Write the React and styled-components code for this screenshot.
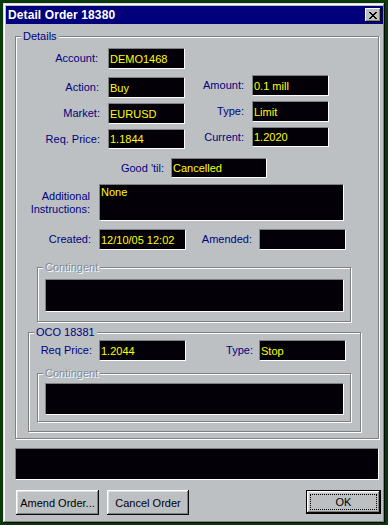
import React from 'react';
import styled, { createGlobalStyle } from 'styled-components';

const GlobalStyle = createGlobalStyle`
	html, body {
		margin: 0;
		padding: 0;
		background: #0a3a0c;
	}
	body {
		padding: 3px 0 0 3px;
		font-family: "Liberation Sans", Arial, sans-serif;
	}
`;

const Window = styled.div`
	width: 382px;
	height: 520px;
	box-sizing: border-box;
	background: #bcc0c3;
	padding: 3px 2px 0 3px;
	box-shadow: inset -1px -1px #0a0a0a, inset 1px 1px #dfdfdf, inset -2px -2px #808080, inset 2px 2px #ffffff;
	display: flex;
	flex-direction: column;
`;

const TitleBar = styled.div`
	height: 18px;
	background: #00007b;
	display: flex;
	align-items: center;
	justify-content: space-between;
	padding: 0 2px 0 2px;
`;

const Title = styled.span`
	font-family: "Liberation Sans", Arial, sans-serif;
	font-weight: bold;
	font-size: 12px;
	color: #fff;
	letter-spacing: 0.1px;
`;

const CloseBox = styled.div`
	width: 16px;
	height: 14px;
	box-sizing: border-box;
	background: #bcc0c3;
	box-shadow: inset -1px -1px #0a0a0a, inset 1px 1px #ffffff, inset -2px -2px #808080;
	display: flex;
	align-items: center;
	justify-content: center;
`;

const Body = styled.div`
	padding: 12px 4px 0 9px;
	display: flex;
	flex-direction: column;
`;

const Group = styled.div`
	position: relative;
	border: 1px solid #808080;
	box-shadow: inset 1px 1px #fff, 1px 1px #fff;
	margin-left: ${({ $ml }) => $ml || 0}px;
	margin-top: ${({ $mt }) => $mt || 0}px;
	width: ${({ $w }) => ($w ? `${$w}px` : 'auto')};
	padding-bottom: ${({ $pb }) => $pb || 0}px;
	box-sizing: border-box;
	display: flex;
	flex-direction: column;
`;

const Caption = styled.span`
	position: absolute;
	top: -7px;
	left: 5px;
	padding: 0 2px;
	background: #bcc0c3;
	font-size: 11px;
	line-height: 13px;
	color: ${({ $disabled }) => ($disabled ? '#858a8e' : '#000080')};
	text-shadow: ${({ $disabled }) => ($disabled ? '1px 1px 0 #fff' : 'none')};
`;

const Row = styled.div`
	display: flex;
	align-items: flex-start;
	margin-top: ${({ $mt }) => $mt}px;
`;

const Pair = styled.div`
	display: flex;
	align-items: center;
	margin-top: ${({ $up }) => ($up ? -$up : 0)}px;
`;

const Label = styled.div`
	width: ${({ $w }) => $w}px;
	padding-right: ${({ $gap }) => $gap}px;
	box-sizing: border-box;
	text-align: right;
	font-size: 11px;
	line-height: 13px;
	color: #000080;
	white-space: pre-line;
`;

const Field = styled.div`
	width: ${({ $w }) => $w}px;
	height: ${({ $h }) => $h}px;
	box-sizing: border-box;
	background: #040008;
	border-top: 1px solid #808080;
	border-left: 1px solid #808080;
	border-bottom: 1px solid #fff;
	border-right: 1px solid #fff;
	color: #ffff00;
	font-size: 11px;
	line-height: ${({ $multi, $h }) => ($multi ? '13px' : `${$h - 3}px`)};
	padding: 1px 0 0 1px;
	margin-left: ${({ $ml }) => $ml || 0}px;
	margin-top: ${({ $mt }) => $mt || 0}px;
	white-space: nowrap;
	overflow: hidden;
`;

const StatusBar = styled(Field)`
	width: auto;
	margin-top: 9px;
`;

const ButtonRow = styled.div`
	display: flex;
	align-items: flex-start;
	gap: 8px;
	margin: 10px -2px 0 1px;
`;

const Button = styled.button`
	width: ${({ $w }) => $w}px;
	height: ${({ $h }) => $h || 25}px;
	padding: 0;
	background: #bcc0c3;
	border: ${({ $default }) => ($default ? '1px solid #000' : 'none')};
	box-shadow: inset -1px -1px #0a0a0a, inset 1px 1px #ffffff, inset -2px -2px #808080, inset 2px 2px #dfdfdf;
	font-family: "Liberation Sans", Arial, sans-serif;
	font-size: 11px;
	color: #000;
	white-space: nowrap;
	margin-left: ${({ $push }) => ($push ? 'auto' : '0')};
	position: relative;
	display: flex;
	align-items: center;
	justify-content: center;
`;

const FocusRing = styled.span`
	position: absolute;
	inset: 3px;
	border: 1px dotted #000;
`;

const CloseIcon = () => (
	<svg width="8" height="7" viewBox="0 0 8 7">
		<path d="M0 0h2v1h1v1h2V1h1V0h2v1H7v1H6v1H5v1h1v1h1v1h1v1H6V6H5V5H3v1H2v1H0V6h1V5h1V4h1V3H2V2H1V1H0z" fill="#000" />
	</svg>
);

const App = () => (
	<>
		<GlobalStyle />
		<Window>
			<TitleBar>
				<Title>Detail Order 18380</Title>
				<CloseBox><CloseIcon /></CloseBox>
			</TitleBar>
			<Body>
				<Group $pb={6}>
					<Caption>Details</Caption>
					<Row $mt={11}>
						<Pair>
							<Label $w={92} $gap={10}>Account:</Label>
							<Field $w={77} $h={21}>DEMO1468</Field>
						</Pair>
					</Row>
					<Row $mt={8}>
						<Pair>
							<Label $w={92} $gap={9}>Action:</Label>
							<Field $w={77} $h={21}>Buy</Field>
						</Pair>
						<Pair $up={2}>
							<Label $w={67} $gap={8}>Amount:</Label>
							<Field $w={77} $h={21}>0.1 mill</Field>
						</Pair>
					</Row>
					<Row $mt={5}>
						<Pair>
							<Label $w={92} $gap={8}>Market:</Label>
							<Field $w={77} $h={21}>EURUSD</Field>
						</Pair>
						<Pair $up={2}>
							<Label $w={67} $gap={8}>Type:</Label>
							<Field $w={77} $h={21}>Limit</Field>
						</Pair>
					</Row>
					<Row $mt={5}>
						<Pair>
							<Label $w={92} $gap={8}>Req. Price:</Label>
							<Field $w={77} $h={20}>1.1844</Field>
						</Pair>
						<Pair $up={2}>
							<Label $w={67} $gap={8}>Current:</Label>
							<Field $w={77} $h={20}>1.2020</Field>
						</Pair>
					</Row>
					<Row $mt={9}>
						<Pair>
							<Label $w={155} $gap={7}>Good 'til:</Label>
							<Field $w={96} $h={20}>Cancelled</Field>
						</Pair>
					</Row>
					<Row $mt={6}>
						<Pair>
							<Label $w={83} $gap={9}>{'Additional\nInstructions:'}</Label>
							<Field $w={245} $h={37} $multi>None</Field>
						</Pair>
					</Row>
					<Row $mt={8}>
						<Pair>
							<Label $w={83} $gap={8}>Created:</Label>
							<Field $w={87} $h={21}>12/10/05 12:02</Field>
						</Pair>
						<Pair>
							<Label $w={73} $gap={7}>Amended:</Label>
							<Field $w={87} $h={21}></Field>
						</Pair>
					</Row>
					<Group $ml={21} $mt={17} $w={314} $pb={9}>
						<Caption $disabled>Contingent</Caption>
						<Field $w={299} $h={33} $ml={7} $mt={11} />
					</Group>
					<Group $ml={12} $mt={10} $w={333} $pb={9}>
						<Caption>OCO 18381</Caption>
						<Row $mt={7}>
							<Pair>
								<Label $w={70} $gap={7}>Req Price:</Label>
								<Field $w={87} $h={21}>1.2044</Field>
							</Pair>
							<Pair>
								<Label $w={73} $gap={6}>Type:</Label>
								<Field $w={87} $h={21}>Stop</Field>
							</Pair>
						</Row>
						<Group $ml={8} $mt={12} $w={314} $pb={6}>
							<Caption $disabled>Contingent</Caption>
							<Field $w={299} $h={32} $ml={7} $mt={9} />
						</Group>
					</Group>
				</Group>
				<StatusBar $h={32} />
				<ButtonRow>
					<Button $w={83}>Amend Order...</Button>
					<Button $w={82}>Cancel Order</Button>
					<Button $w={75} $h={24} $default $push>
						<FocusRing />
						OK
					</Button>
				</ButtonRow>
			</Body>
		</Window>
	</>
);

export default App;
